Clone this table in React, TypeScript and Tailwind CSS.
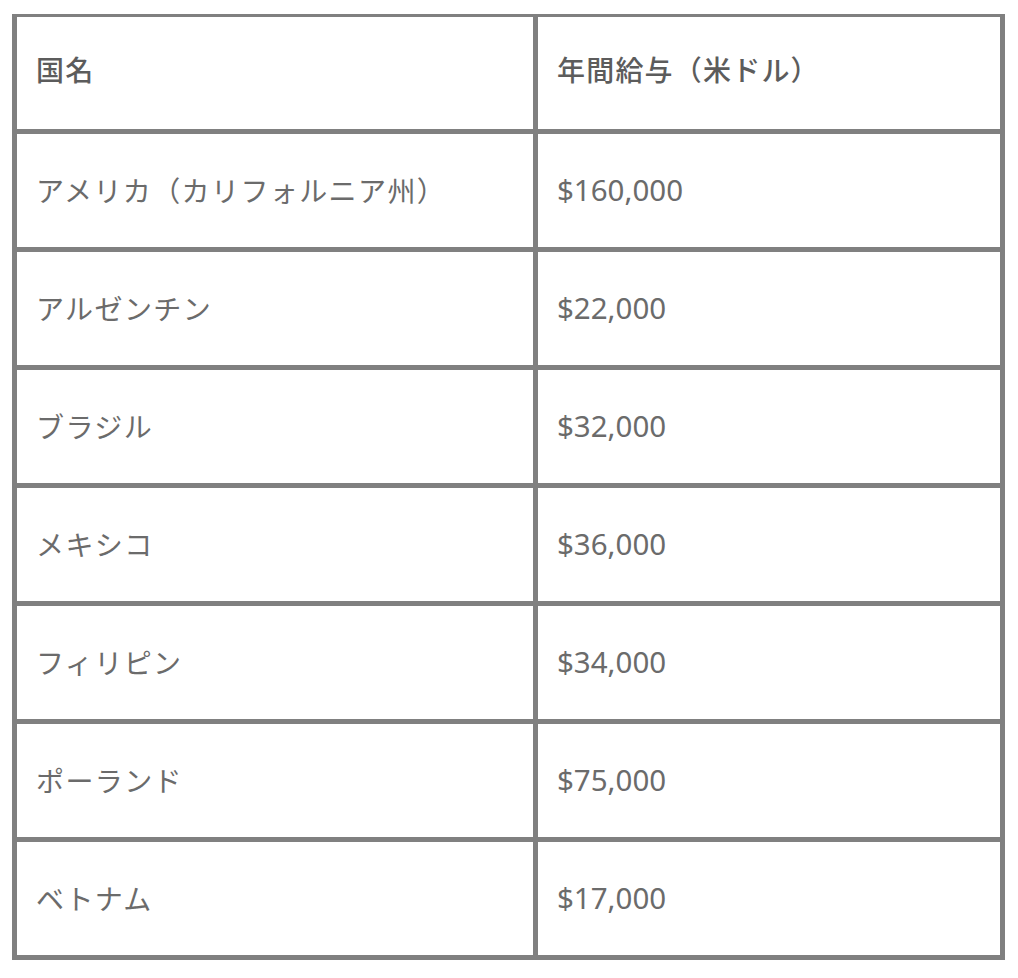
const rows = [
  { country: "アメリカ（カリフォルニア州）", salary: "$160,000" },
  { country: "アルゼンチン", salary: "$22,000" },
  { country: "ブラジル", salary: "$32,000" },
  { country: "メキシコ", salary: "$36,000" },
  { country: "フィリピン", salary: "$34,000" },
  { country: "ポーランド", salary: "$75,000" },
  { country: "ベトナム", salary: "$17,000" },
]

const jp = { fontFamily: '"Noto Sans CJK JP", "Noto Sans", sans-serif' }
const latin = { fontFamily: '"Noto Sans", "Noto Sans CJK JP", sans-serif' }

export default function App() {
  return (
    <div className="min-h-[978px] bg-white pt-[14px] pl-[12px]" style={jp}>
      <div className="inline-grid grid-cols-[516px_462px] gap-[5px] bg-[#808080] pt-[3px] px-[5px] pb-[5px]">
        <div className="h-[112px] bg-white flex items-center pl-[19px] pb-[8px] text-[28px] tracking-[1.2px] font-medium text-[#5c5c5c]">国名</div>
        <div className="h-[112px] bg-white flex items-center pl-[19px] pb-[8px] text-[28px] tracking-[1.2px] font-medium text-[#5c5c5c]">年間給与（米ドル）</div>
        {rows.map((r) => (
          <>
            <div key={r.country} className="h-[113px] bg-white flex items-center pl-[19px] pb-[2px] text-[28px] tracking-[1.4px] text-[#6b6b6b]">
              {r.country}
            </div>
            <div key={r.salary} className="h-[113px] bg-white flex items-center pl-[19px] text-[29.5px] text-[#6b6b6b]" style={latin}>
              {r.salary}
            </div>
          </>
        ))}
      </div>
    </div>
  )
}
